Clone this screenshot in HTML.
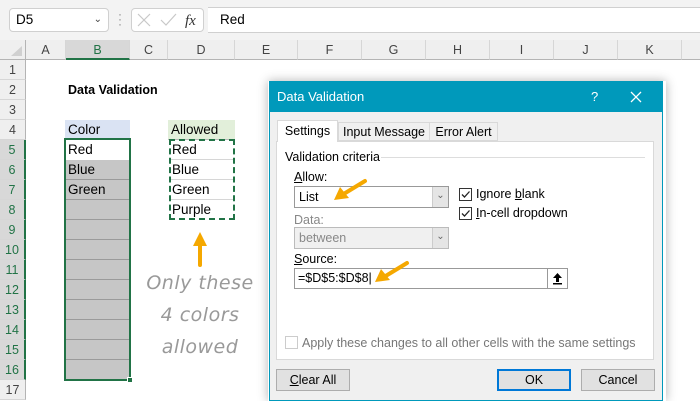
<!DOCTYPE html>
<html><head><meta charset="utf-8"><style>
*{box-sizing:border-box;margin:0;padding:0}
body{width:700px;height:400px;overflow:hidden;background:#fff;font-family:"Liberation Sans","DejaVu Sans",sans-serif;font-size:13px;color:#000;position:relative}
.a{position:absolute}
.ch{position:absolute;top:40px;height:20px;background:#efefef;border-right:1px solid #d6d6d6;border-bottom:1px solid #b4b4b4;text-align:center;line-height:20px;color:#444;font-size:12.5px}
.rh{position:absolute;left:0;width:26px;height:20px;background:#efefef;border-bottom:1px solid #d6d6d6;border-right:1px solid #b4b4b4;text-align:center;line-height:20px;color:#444;font-size:12.5px}
.cell{position:absolute;height:20px;line-height:20px;padding-left:3px;font-size:13.5px}
.dl{font-size:12.5px;color:#000}
u{text-decoration:underline}
.btn{position:absolute;height:22px;background:#e1e1e1;border:1px solid #adadad;text-align:center;line-height:20px;font-size:12.5px}
.chk{position:absolute;width:13px;height:13px;border:1px solid #333;background:#fff}
</style></head><body>
<div class="a" style="left:0;top:0;width:700px;height:40px;background:#f3f3f3"></div>
<div class="a" style="top:7px;height:26px;background:#fff;border-top:1px solid #d0d0d0;border-bottom:1px solid #d0d0d0;left:208px;width:492px"></div>
<div class="a" style="left:9px;top:8px;width:100px;height:24px;background:#fff;border:1px solid #d0d0d0;border-radius:4px;padding-left:6px;line-height:22px;font-size:13.5px">D5<span style="position:absolute;right:6px;top:0;font-size:10px;color:#444">&#8964;</span></div>
<div class="a" style="left:118px;top:12px;color:#888;font-size:12px;line-height:5px">·<br>·<br>·</div>
<div class="a" style="left:131px;top:8px;width:73px;height:24px;background:#fff;border:1px solid #d0d0d0;border-radius:4px"></div>
<svg class="a" style="left:131px;top:8px" width="73" height="24"><path d="M7 6l12 12M19 6L7 18" stroke="#c8c8c8" stroke-width="1.2" fill="none"/><path d="M30 12l5 5 10-11" stroke="#c8c8c8" stroke-width="1.2" fill="none"/><text x="54" y="17" font-family="Liberation Serif" font-style="italic" font-size="15" fill="#333">fx</text></svg>
<div class="a" style="left:208px;top:8px;height:24px;line-height:24px;padding-left:12px;font-size:13.5px">Red</div>
<div class="a" style="left:0;top:40px;width:26px;height:20px;background:#efefef;border-right:1px solid #b4b4b4;border-bottom:1px solid #b4b4b4"></div>
<svg class="a" style="left:10px;top:45px" width="13" height="12"><path d="M12 1L12 11 1 11Z" fill="#d0d0d0"/></svg>
<div class="ch" style="left:26px;width:40px">A</div>
<div class="ch" style="left:66px;width:64px;background:#d8d8d8;color:#217346;border-bottom:2px solid #217346">B</div>
<div class="ch" style="left:130px;width:38px">C</div>
<div class="ch" style="left:168px;width:67px">D</div>
<div class="ch" style="left:235px;width:63px">E</div>
<div class="ch" style="left:298px;width:64px">F</div>
<div class="ch" style="left:362px;width:64px">G</div>
<div class="ch" style="left:426px;width:64px">H</div>
<div class="ch" style="left:490px;width:64px">I</div>
<div class="ch" style="left:554px;width:64px">J</div>
<div class="ch" style="left:618px;width:64px">K</div>
<div class="ch" style="left:682px;width:30px"></div>
<div class="rh" style="top:60px">1</div><div class="rh" style="top:80px">2</div><div class="rh" style="top:100px">3</div><div class="rh" style="top:120px">4</div>
<div class="rh" style="top:140px;background:#d8d8d8;color:#217346;border-right:2px solid #217346">5</div>
<div class="rh" style="top:160px;background:#d8d8d8;color:#217346;border-right:2px solid #217346">6</div>
<div class="rh" style="top:180px;background:#d8d8d8;color:#217346;border-right:2px solid #217346">7</div>
<div class="rh" style="top:200px;background:#d8d8d8;color:#217346;border-right:2px solid #217346">8</div>
<div class="rh" style="top:220px;background:#d8d8d8;color:#217346;border-right:2px solid #217346">9</div>
<div class="rh" style="top:240px;background:#d8d8d8;color:#217346;border-right:2px solid #217346">10</div>
<div class="rh" style="top:260px;background:#d8d8d8;color:#217346;border-right:2px solid #217346">11</div>
<div class="rh" style="top:280px;background:#d8d8d8;color:#217346;border-right:2px solid #217346">12</div>
<div class="rh" style="top:300px;background:#d8d8d8;color:#217346;border-right:2px solid #217346">13</div>
<div class="rh" style="top:320px;background:#d8d8d8;color:#217346;border-right:2px solid #217346">14</div>
<div class="rh" style="top:340px;background:#d8d8d8;color:#217346;border-right:2px solid #217346">15</div>
<div class="rh" style="top:360px;background:#d8d8d8;color:#217346;border-right:2px solid #217346">16</div>
<div class="rh" style="top:380px">17</div>
<div class="cell" style="left:65px;top:80px;font-weight:bold;font-size:12.5px">Data Validation</div>
<div class="cell" style="left:65px;top:120px;width:65px;background:#dae3f3;border-bottom:1px solid #bbb">Color</div>
<div class="cell" style="left:168px;top:120px;width:67px;background:#e2efda;border-bottom:1px solid #bbb">Allowed</div>
<div class="a" style="left:66px;top:140px;width:63px;height:240px;background:repeating-linear-gradient(#c6c6c6 0 19px,#9a9a9a 19px 20px)"></div>
<div class="a" style="left:66px;top:140px;width:63px;height:20px;background:#fff"></div>
<div class="a" style="left:64px;top:138px;width:67px;height:243px;border:2px solid #217346"></div>
<div class="a" style="left:127px;top:377px;width:6px;height:6px;background:#217346;border:1px solid #fff"></div>
<div class="cell" style="left:65px;top:140px">Red</div>
<div class="cell" style="left:65px;top:160px">Blue</div>
<div class="cell" style="left:65px;top:180px">Green</div>
<div class="a" style="left:169px;top:159px;width:65px;height:1px;background:#d6d6d6"></div>
<div class="a" style="left:169px;top:179px;width:65px;height:1px;background:#d6d6d6"></div>
<div class="a" style="left:169px;top:199px;width:65px;height:1px;background:#d6d6d6"></div>
<div class="a" style="left:169px;top:139px;width:66px;height:81px;border:2px dashed #217346"></div>
<div class="cell" style="left:169px;top:140px">Red</div>
<div class="cell" style="left:169px;top:160px">Blue</div>
<div class="cell" style="left:169px;top:180px">Green</div>
<div class="cell" style="left:169px;top:200px">Purple</div>
<svg class="a" style="left:190px;top:230px" width="20" height="40"><path d="M10 2L17 16H3Z" fill="#f5a800"/><rect x="8" y="14" width="4" height="23" rx="2" fill="#f5a800"/></svg>
<div class="a" style="left:140px;top:267px;width:120px;text-align:center;color:#999;font-family:'DejaVu Sans',sans-serif;font-style:italic;font-size:19px;line-height:32px;letter-spacing:0.5px">Only these<br>4 colors<br>allowed</div>
<div class="a" style="left:268px;top:81px;width:398px;height:320px;box-shadow:0 0 10px rgba(0,0,0,0.3)"></div>
<div class="a" style="left:269px;top:81px;width:394px;height:320px;background:#f0f0f0;border:1px solid #0099bb"></div>
<div class="a" style="left:269px;top:81px;width:394px;height:31px;background:#0099bb;color:#fff;font-size:13px;line-height:31px;padding-left:8px">Data Validation
<span style="position:absolute;left:322px;top:0">?</span>
<svg style="position:absolute;left:361px;top:10px" width="12" height="12"><path d="M1 1l10 10M11 1L1 11" stroke="#fff" stroke-width="1.3"/></svg></div>
<div class="a" style="left:276px;top:141px;width:378px;height:219px;background:#fff;border:1px solid #d9d9d9"></div>
<div class="a dl" style="left:277px;top:120px;width:61px;height:22px;background:#fff;border:1px solid #d9d9d9;border-bottom:none;text-align:center;line-height:20px">Settings</div>
<div class="a dl" style="left:338px;top:122px;width:92px;height:19px;background:#f0f0f0;border:1px solid #d9d9d9;text-align:center;line-height:18px">Input Message</div>
<div class="a dl" style="left:429px;top:122px;width:69px;height:19px;background:#f0f0f0;border:1px solid #d9d9d9;text-align:center;line-height:18px">Error Alert</div>
<div class="a dl" style="left:285px;top:150px">Validation criteria</div>
<div class="a" style="left:381px;top:157px;width:264px;height:1px;background:#ddd"></div>
<div class="a dl" style="left:294px;top:170px"><u>A</u>llow:</div>
<div class="a dl" style="left:294px;top:186px;width:155px;height:22px;background:#fff;border:1px solid #999;line-height:20px;padding-left:4px">List</div>
<div class="a" style="left:432px;top:187px;width:16px;height:20px;background:#e5e5e5;border-left:1px solid #ccc;color:#666;font-size:10px;text-align:center;line-height:18px">&#8964;</div>
<div class="a dl" style="left:294px;top:213px;color:#888">Data:</div>
<div class="a dl" style="left:294px;top:227px;width:155px;height:22px;background:#f0f0f0;border:1px solid #bbb;line-height:20px;padding-left:4px;color:#888">between</div>
<div class="a" style="left:432px;top:228px;width:16px;height:20px;background:#e5e5e5;border-left:1px solid #ccc;color:#666;font-size:10px;text-align:center;line-height:18px">&#8964;</div>
<div class="a dl" style="left:294px;top:252px"><u>S</u>ource:</div>
<div class="a dl" style="left:294px;top:268px;width:254px;height:21px;background:#fff;border:1px solid #999;line-height:19px;padding-left:3px">=$D$5:$D$8|</div>
<div class="a" style="left:547px;top:268px;width:21px;height:21px;background:#fff;border:1px solid #999"></div>
<svg class="a" style="left:551px;top:272px" width="13" height="13"><path d="M6.5 1L11 6H8v4H5V6H2Z" fill="#000"/><rect x="2" y="11" width="9" height="1.5" fill="#000"/></svg>
<div class="chk" style="left:459px;top:188px"></div><svg class="a" style="left:460px;top:189px" width="11" height="11"><path d="M2 5.5l2.5 2.5L9.5 2.5" stroke="#222" stroke-width="1.3" fill="none"/></svg>
<div class="a dl" style="left:476px;top:187px">Ignore <u>b</u>lank</div>
<div class="chk" style="left:459px;top:207px"></div><svg class="a" style="left:460px;top:208px" width="11" height="11"><path d="M2 5.5l2.5 2.5L9.5 2.5" stroke="#222" stroke-width="1.3" fill="none"/></svg>
<div class="a dl" style="left:476px;top:206px"><u>I</u>n-cell dropdown</div>
<div class="chk" style="left:285px;top:336px;border-color:#ccc"></div>
<div class="a dl" style="left:302px;top:336px;color:#777">Apply these changes to all other cells with the same settings</div>
<div class="btn" style="left:276px;top:369px;width:74px"><u>C</u>lear All</div>
<div class="btn" style="left:497px;top:369px;width:74px;border:2px solid #0078d7;line-height:18px">OK</div>
<div class="btn" style="left:581px;top:369px;width:74px">Cancel</div>
<svg class="a" style="left:330px;top:175px" width="45" height="30"><path d="M35 6L12 20" stroke="#f5a800" stroke-width="4" stroke-linecap="round"/><path d="M4 25L10 12L19 23Z" fill="#f5a800"/></svg>
<svg class="a" style="left:370px;top:258px" width="45" height="30"><path d="M37 5L14 19" stroke="#f5a800" stroke-width="4" stroke-linecap="round"/><path d="M5 24L11 11L20 22Z" fill="#f5a800"/></svg>
</body></html>
